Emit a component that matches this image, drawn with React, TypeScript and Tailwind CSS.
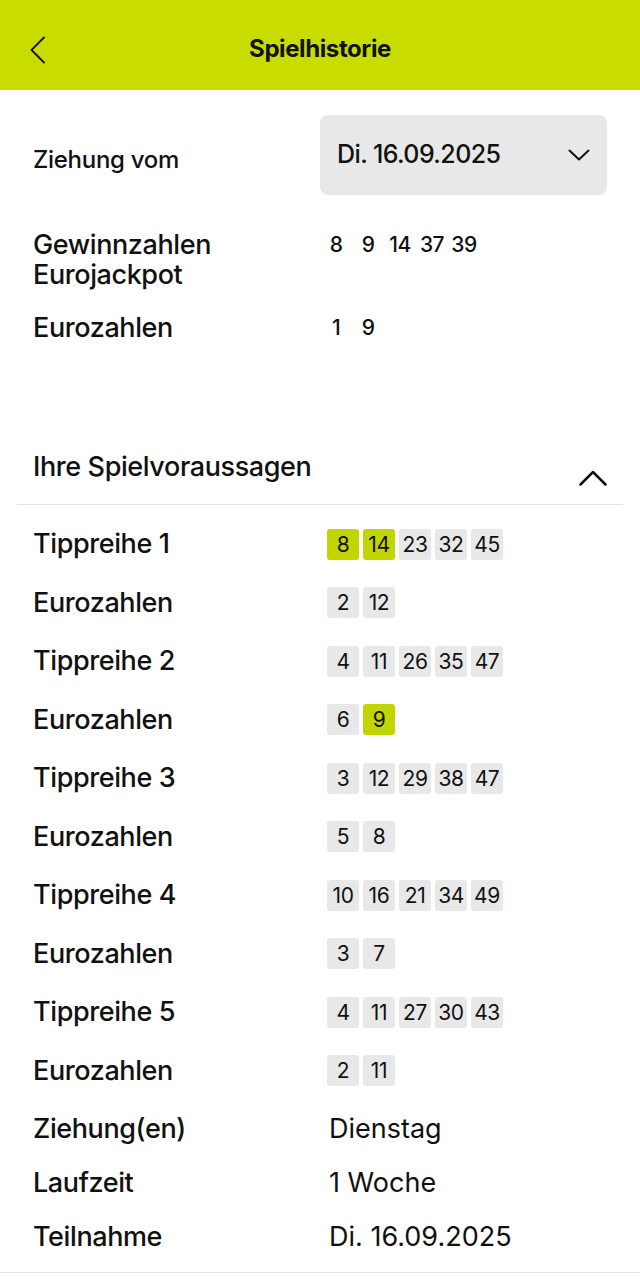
import React from "react";

const font = { fontFamily: "Inter, 'Noto Sans', sans-serif" };

type Chip = { n: number; hit?: boolean };

const rows: { label: string; chips: Chip[] }[] = [
  { label: "Tippreihe 1", chips: [{ n: 8, hit: true }, { n: 14, hit: true }, { n: 23 }, { n: 32 }, { n: 45 }] },
  { label: "Eurozahlen", chips: [{ n: 2 }, { n: 12 }] },
  { label: "Tippreihe 2", chips: [{ n: 4 }, { n: 11 }, { n: 26 }, { n: 35 }, { n: 47 }] },
  { label: "Eurozahlen", chips: [{ n: 6 }, { n: 9, hit: true }] },
  { label: "Tippreihe 3", chips: [{ n: 3 }, { n: 12 }, { n: 29 }, { n: 38 }, { n: 47 }] },
  { label: "Eurozahlen", chips: [{ n: 5 }, { n: 8 }] },
  { label: "Tippreihe 4", chips: [{ n: 10 }, { n: 16 }, { n: 21 }, { n: 34 }, { n: 49 }] },
  { label: "Eurozahlen", chips: [{ n: 3 }, { n: 7 }] },
  { label: "Tippreihe 5", chips: [{ n: 4 }, { n: 11 }, { n: 27 }, { n: 30 }, { n: 43 }] },
  { label: "Eurozahlen", chips: [{ n: 2 }, { n: 11 }] },
];

function Numbers({ nums }: { nums: number[] }) {
  return (
    <div className="flex">
      {nums.map((n, i) => (
        <span key={i} className="w-[32px] text-center text-[21px] font-medium leading-[30px] tracking-[-0.5px]">
          {n}
        </span>
      ))}
    </div>
  );
}

const label = "text-[27px] font-medium tracking-[-0.4px]";

export default function App() {
  return (
    <div className="w-[640px] min-h-[1285px] bg-white text-[#111]" style={font}>
      {/* Header */}
      <div className="relative flex h-[90px] items-center justify-center bg-[#c9dc00] pt-[8px]">
        <button className="absolute left-[29px] top-[36px] h-[28px] w-[18px]" aria-label="Zurück">
          <svg width="18" height="28" viewBox="0 0 18 28" fill="none">
            <path d="M15 1.5 L2.5 14 L15 26.5" stroke="#111" strokeWidth="1.8" strokeLinecap="round" strokeLinejoin="round" />
          </svg>
        </button>
        <h1 className="text-[24px] font-bold tracking-[-0.4px]">Spielhistorie</h1>
      </div>

      {/* Draw selector */}
      <div className="flex px-[33px] pt-[25px]">
        <div className="flex h-[80px] w-[287px] items-center pt-[10px] text-[24px] font-medium tracking-[-0.3px]">
          Ziehung vom
        </div>
        <div className="flex h-[80px] w-[287px] items-center justify-between rounded-[8px] bg-[#e8e8e8] pl-[17px] pr-[17px]">
          <span className="text-[25px] font-medium tracking-[-0.6px]">Di. 16.09.2025</span>
          <svg width="22" height="12" viewBox="0 0 22 12" fill="none">
            <path d="M1.5 1.5 L11 10.5 L20.5 1.5" stroke="#111" strokeWidth="2" strokeLinecap="round" strokeLinejoin="round" />
          </svg>
        </div>
      </div>

      {/* Winning numbers */}
      <div className="mt-[35px] flex pl-[33px]">
        <div className={"w-[287px] leading-[30px] " + label}>
          Gewinnzahlen
          <br />
          Eurojackpot
        </div>
        <Numbers nums={[8, 9, 14, 37, 39]} />
      </div>
      <div className="mt-[23px] flex pl-[33px]">
        <div className={"w-[287px] leading-[30px] " + label}>Eurozahlen</div>
        <Numbers nums={[1, 9]} />
      </div>

      {/* Predictions header */}
      <div className="mt-[109px] flex items-start justify-between pl-[33px] pr-[33px]">
        <div className={"leading-[30px] " + label}>Ihre Spielvoraussagen</div>
        <svg className="mt-[18px]" width="28" height="16" viewBox="0 0 28 16" fill="none">
          <path d="M1.5 14.5 L14 2 L26.5 14.5" stroke="#111" strokeWidth="2.5" strokeLinecap="round" strokeLinejoin="round" />
        </svg>
      </div>
      <div className="mx-[17px] mt-[18px] h-px bg-[#e3e3e3]" />

      {/* Prediction rows */}
      <div className="mt-[10px] flex flex-col">
        {rows.map((r, i) => (
          <div key={i} className="flex h-[58.5px] items-center px-[33px]">
            <div className={"w-[294px] " + label}>{r.label}</div>
            <div className="flex gap-[4px]">
              {r.chips.map((c, j) => (
                <span
                  key={j}
                  className={
                    "flex h-[31px] w-[32px] items-center justify-center rounded-[3px] text-[21px] tracking-[-0.4px] " +
                    (c.hit ? "bg-[#c3d500]" : "bg-[#e8e8e8]")
                  }
                >
                  {c.n}
                </span>
              ))}
            </div>
          </div>
        ))}
      </div>

      {/* Details */}
      <div className="mt-[2px] flex flex-col">
        {[
          ["Ziehung(en)", "Dienstag"],
          ["Laufzeit", "1 Woche"],
          ["Teilnahme", "Di. 16.09.2025"],
        ].map(([k, v]) => (
          <div key={k} className="flex h-[54px] items-center px-[33px]">
            <div className={"w-[296px] " + label}>{k}</div>
            <div className="text-[27px] font-normal tracking-[0px]">{v}</div>
          </div>
        ))}
      </div>
      <div className="mt-[8px] h-px bg-[#e3e3e3]" />
    </div>
  );
}
